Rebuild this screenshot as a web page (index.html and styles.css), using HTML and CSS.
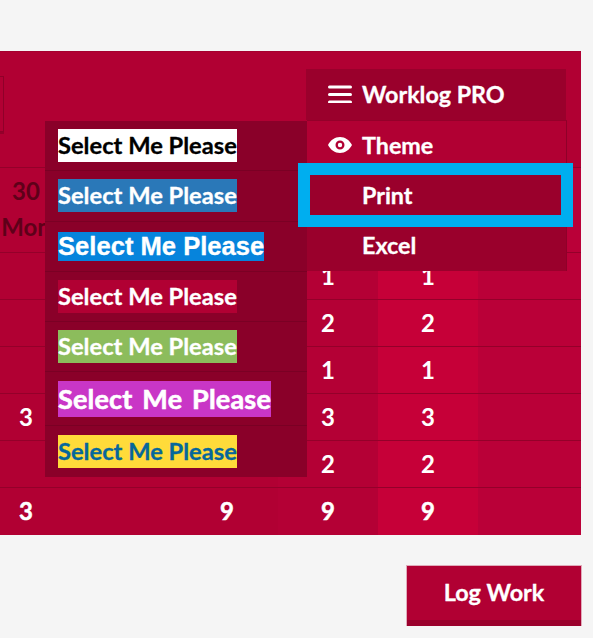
FILE: index.html
```html
<!DOCTYPE html>
<html>
<head>
  <title>Worklog</title>
  <link rel="stylesheet" href="styles.css">
</head>
<body>
  <div class="painel">
    <div class="barra">
      <div class="caixa-data"></div>
    </div>
    <table class="tabela">
      <colgroup>
        <col class="col-a"><col class="col-b"><col class="col-c"><col class="col-d"><col class="col-e"><col class="col-f">
      </colgroup>
      <tr class="cabecalho">
        <th>30<br>Mon</th><th></th><th></th><td></td><td class="claro"></td><td class="fim"></td>
      </tr>
      <tr><td></td><td></td><td></td><td class="escuro">1</td><td class="claro">1</td><td class="fim"></td></tr>
      <tr><td></td><td></td><td></td><td class="escuro">2</td><td class="claro">2</td><td class="fim"></td></tr>
      <tr><td></td><td></td><td></td><td class="escuro">1</td><td class="claro">1</td><td class="fim"></td></tr>
      <tr><td>3</td><td></td><td></td><td class="escuro">3</td><td class="claro">3</td><td class="fim"></td></tr>
      <tr><td></td><td></td><td></td><td class="escuro">2</td><td class="claro">2</td><td class="fim"></td></tr>
      <tr class="total"><td>3</td><td></td><td>9</td><td class="escuro">9</td><td class="claro">9</td><td class="fim"></td></tr>
    </table>

    <div class="menu-temas">
      <div class="tema"><span class="amostra branco">Select Me Please</span></div>
      <div class="tema"><span class="amostra azul">Select Me Please</span></div>
      <div class="tema"><span class="amostra arial">Select Me Please</span></div>
      <div class="tema"><span class="amostra vermelho">Select Me Please</span></div>
      <div class="tema"><span class="amostra verde">Select Me Please</span></div>
      <div class="tema tema-alto"><span class="amostra comic">Select Me Please</span></div>
      <div class="tema"><span class="amostra amarelo">Select Me Please</span></div>
    </div>

    <div class="menu-pro">
      <div class="menu-titulo">
        <svg class="icone" width="24" height="18" viewBox="0 0 24 18"><path d="M1.500 2h21M1.500 9.500h21M1.500 17h21" stroke="#fff" stroke-width="3" fill="none" stroke-linecap="round"/></svg>
        <span>Worklog PRO</span>
      </div>
      <div class="menu-item tema-item">
        <svg class="icone" width="24" height="16" viewBox="0 0 24 16"><path fill="#fff" fill-rule="evenodd" d="M12 0C6.800 0 2.600 3.200 0 8c2.600 4.800 6.800 8 12 8s9.400-3.200 12-8c-2.600-4.800-6.800-8-12-8zM12 3.500a4.500 4.500 0 1 1 0 9 4.500 4.500 0 0 1 0-9z"/><circle cx="12" cy="8" r="2.200" fill="#fff"/></svg>
        <span>Theme</span>
      </div>
      <div class="menu-item sem-icone">Print</div>
      <div class="menu-item sem-icone">Excel</div>
      <div class="destaque"></div>
    </div>
  </div>

  <div class="rodape">
    <button class="botao-log">Log Work</button>
  </div>
</body>
</html>
```

FILE: styles.css
```css
body {
  margin: 0;
  background: #f5f5f5;
  font-family: "Lato", "Liberation Sans", sans-serif;
  color: #fff;
  overflow: hidden;
}

.painel {
  position: relative;
  width: 581px;
  margin-top: 51px;
  background: #b10033;
  border-top: 1px solid #a5002f;
  box-sizing: border-box;
}

.barra {
  height: 116px;
  padding-top: 24px;
  box-sizing: border-box;
  border-bottom: 1px solid #94002a;
}

.caixa-data {
  width: 3px;
  height: 54px;
  border: 1px solid #8f0029;
  border-left: 0;
  box-shadow: 0 2px 0 #94002a;
}

.tabela {
  width: 581px;
  border-collapse: separate;
  border-spacing: 0;
  table-layout: fixed;
  font-size: 24px;
}

.col-a { width: 52px; }
.col-b { width: 124px; }
.col-c { width: 102px; }
.col-d { width: 100px; }
.col-e { width: 100px; }
.col-f { width: 103px; }

.tabela td, .tabela th {
  height: 47px;
  padding: 0 0 2px;
  text-align: center;
  font-weight: 700;
  border-bottom: 1px solid #94002a;
  box-sizing: border-box;
}

.tabela tr:last-child td {
  border-bottom: 0;
}

.cabecalho th, .cabecalho td {
  height: 85px;
}

.cabecalho th {
  color: #5e0019;
  line-height: 36px;
}

.total td {
  -webkit-text-stroke: 0.5px;
}

.escuro { background: #b40035; }
.claro { background: #c60038; }
.fim { background: #ba0038; }

.menu-temas {
  position: absolute;
  left: 45px;
  top: 69px;
  width: 262px;
  background: #8a0029;
}

.tema {
  display: flex;
  align-items: center;
  height: 50.3px;
  padding-left: 13px;
  border-bottom: 1px solid #7a0024;
  box-sizing: border-box;
}

.tema:last-child {
  border-bottom: 0;
}

.tema-alto {
  height: 54px;
}

.amostra {
  font-size: 23.7px;
  font-weight: 700;
  line-height: 33px;
  white-space: nowrap;
  -webkit-text-stroke: 0.3px;
}

.branco { background: #fff; color: #000; }
.azul { background: #2a78b8; }
.arial { background: #0684dc; font-family: "Liberation Sans", sans-serif; font-size: 25.6px; line-height: 29px; }
.vermelho { background: #b10033; }
.verde { background: #8cbc5c; }
.comic { background: #c936c6; font-size: 27px; line-height: 36px; letter-spacing: 0.2px; word-spacing: 3px; -webkit-text-stroke: 0.6px; }
.amarelo { background: #ffdb3a; color: #06679b; }

.menu-pro {
  position: absolute;
  left: 306px;
  top: 17px;
  width: 260px;
  font-size: 23.3px;
  font-weight: 700;
  -webkit-text-stroke: 0.3px;
}

.menu-titulo {
  display: flex;
  align-items: center;
  height: 51px;
  padding: 0 0 1px 22px;
  box-sizing: border-box;
  background: #9a002c;
}

.menu-item {
  display: flex;
  align-items: center;
  height: 50.3px;
  margin-left: 1px;
  margin-right: -1px;
  padding: 0 0 1px 21px;
  background: #9a002c;
  border-right: 1px solid #8f0029;
  box-sizing: border-box;
}

.tema-item {
  background: #b10033;
  border-top: 1px solid #94002a;
}

.sem-icone {
  padding-left: 55px;
}

.icone {
  flex: none;
  margin-right: 10px;
}

.destaque {
  position: absolute;
  left: -8px;
  top: 94px;
  width: 251px;
  height: 40px;
  border: 12px solid #00aeef;
}

.rodape {
  display: flex;
  justify-content: flex-end;
  width: 581px;
  margin-top: 31px;
}

.botao-log {
  width: 174px;
  height: 60px;
  background: #b10033;
  color: #fff;
  border: 0;
  border-bottom: 6px solid #9a002c;
  box-shadow: 0 0 0 1px rgba(177, 0, 51, 0.3);
  font-family: inherit;
  font-size: 23.4px;
  font-weight: 700;
  padding: 0 0 2px;
  -webkit-text-stroke: 0.3px;
}
```
